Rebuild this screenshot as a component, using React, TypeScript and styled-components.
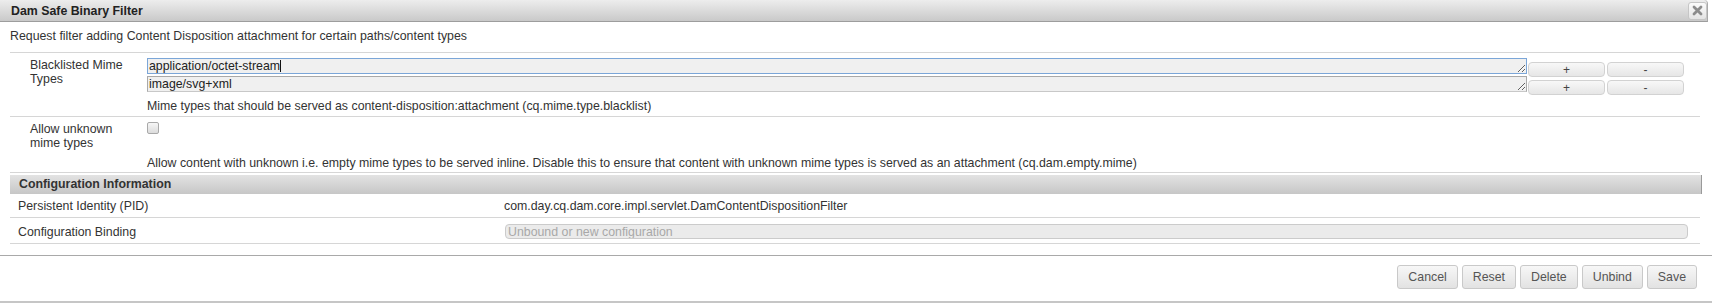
import React from "react";
import styled, { createGlobalStyle } from "styled-components";

const Global = createGlobalStyle`
  html, body { margin: 0; padding: 0; background: #fff; }
  body {
    font-family: "Liberation Sans", Arial, sans-serif;
    font-size: 12.35px;
    color: #333;
  }
  #root { width: 1712px; height: 303px; overflow: hidden; }
`;

const Dialog = styled.div`
  width: 1712px;
  height: 303px;
  display: flex;
  flex-direction: column;
  background: #fff;
`;

const TitleBar = styled.div`
  box-sizing: border-box;
  width: 1708px;
  height: 22px;
  display: flex;
  align-items: center;
  justify-content: space-between;
  padding-left: 11px;
  background: linear-gradient(#ededed, #c9c9c9);
  border-bottom: 1px solid #9d9d9d;
  border-right: 1px solid #a9a9a9;
  border-top-right-radius: 4px;
`;

const Title = styled.span`
  font-weight: bold;
  color: #222;
  line-height: 14px;
`;

const CloseButton = styled.button`
  box-sizing: border-box;
  width: 19px;
  height: 18px;
  margin: 0;
  padding: 0;
  display: flex;
  align-items: center;
  justify-content: center;
  background: linear-gradient(#fbfbfb, #e4e4e4);
  border: 1px solid #c6c6c6;
  border-radius: 3px;
`;

const Content = styled.div`
  padding: 0 12px 0 10px;
`;

const Description = styled.div`
  padding: 7px 0 9px;
  line-height: 14px;
  border-bottom: 1px solid #d6d6d6;
`;

const FieldRow = styled.div`
  display: grid;
  grid-template-columns: 137px 1fr;
  border-bottom: 1px solid #d6d6d6;
`;

const FieldLabel = styled.div`
  padding: 5px 15px 0 20px;
  line-height: 14px;
`;

const FieldValue = styled.div<{ $bottom: number }>`
  padding-top: 5px;
  padding-bottom: ${(p) => p.$bottom}px;
  display: flex;
  flex-direction: column;
  align-items: flex-start;
`;

const MultiRow = styled.div`
  display: flex;
  align-items: flex-start;
  height: 18px;
`;

const TextWrap = styled.div`
  position: relative;
  display: flex;
`;

const Caret = styled.span`
  position: absolute;
  top: 2px;
  left: 133px;
  width: 1px;
  height: 12px;
  background: #111;
`;

const TextArea = styled.textarea<{ $focused?: boolean }>`
  box-sizing: border-box;
  width: 1380px;
  height: 16px;
  margin: 0;
  padding: 0 1px;
  font-family: inherit;
  font-size: 12.35px;
  line-height: 14px;
  color: #222;
  background: #f0f0f0;
  border: 1px solid ${(p) => (p.$focused ? "#7ba6d8" : "#a9a9a9")};
  border-bottom-color: ${(p) => (p.$focused ? "#7ba6d8" : "#c8c8c8")};
  overflow: hidden;
  resize: both;
  outline: none;
`;

const SmallButton = styled.button<{ $first?: boolean }>`
  box-sizing: border-box;
  width: 77px;
  height: 15px;
  margin: 4px 0 0 ${(p) => (p.$first ? 1 : 2)}px;
  padding: 0;
  font-family: inherit;
  font-size: 12px;
  line-height: 12px;
  color: #444;
  background: linear-gradient(#f8f8f8, #e6e6e6);
  border: 1px solid #d2d2d2;
  border-radius: 4px;
`;

const Help = styled.div<{ $top: number }>`
  margin-top: ${(p) => p.$top}px;
  line-height: 14px;
`;

const Checkbox = styled.input`
  appearance: none;
  box-sizing: border-box;
  width: 12px;
  height: 12px;
  margin: 0;
  border: 1px solid #a9a9a9;
  border-radius: 2px;
  background: linear-gradient(#f6f6f6, #dcdcdc);
`;

const SectionHeader = styled.div`
  box-sizing: border-box;
  margin: 2px -2px 0 0;
  height: 19px;
  padding-left: 9px;
  line-height: 19px;
  font-weight: bold;
  color: #333;
  background: linear-gradient(#e3e3e3, #c6c6c6);
  border-right: 1px solid #9a9a9a;
`;

const InfoRow = styled.div<{ $top: number; $bottom: number }>`
  display: grid;
  grid-template-columns: 494px 1fr;
  align-items: center;
  padding: ${(p) => p.$top}px 0 ${(p) => p.$bottom}px;
  border-bottom: 1px solid #d6d6d6;
  line-height: 14px;
`;

const InfoLabel = styled.div`
  padding-left: 8px;
`;

const BindingInput = styled.input`
  box-sizing: border-box;
  width: 1183px;
  height: 15px;
  margin: 0 0 0 1px;
  padding: 0 2px;
  font-family: inherit;
  font-size: 12.35px;
  line-height: 13px;
  background: #ebebeb;
  border: 1px solid #cbcbcb;
  border-radius: 4px;
  outline: none;
  &::placeholder { color: #a8a8a8; }
`;

const Footer = styled.div`
  margin-top: 11px;
  border-top: 1px solid #a9a9a9;
  border-bottom: 2px solid #c6c6c6;
  padding: 9px 15px 12px 0;
  display: flex;
  justify-content: flex-end;
  gap: 4px;
`;

const FooterButton = styled.button`
  box-sizing: border-box;
  height: 24px;
  margin: 0;
  padding: 0 10px;
  font-family: inherit;
  font-size: 12.35px;
  color: #555;
  background: linear-gradient(#f7f7f7, #e2e2e2);
  border: 1px solid #c9c9c9;
  border-radius: 3px;
`;

const CloseIcon = () => (
  <svg width="11" height="11" viewBox="0 0 11 11">
    <path d="M2 2 L9 9 M9 2 L2 9" stroke="#8c8c8c" strokeWidth="2.8" strokeLinecap="round" />
  </svg>
);

export default function App() {
  return (
    <>
      <Global />
      <Dialog>
        <TitleBar>
          <Title>Dam Safe Binary Filter</Title>
          <CloseButton aria-label="close">
            <CloseIcon />
          </CloseButton>
        </TitleBar>
        <Content>
          <Description>
            Request filter adding Content Disposition attachment for certain paths/content types
          </Description>
          <FieldRow>
            <FieldLabel>Blacklisted Mime Types</FieldLabel>
            <FieldValue $bottom={3}>
              <MultiRow>
                <TextWrap>
                  <TextArea $focused defaultValue="application/octet-stream" rows={1} />
                  <Caret />
                </TextWrap>
                <SmallButton $first>+</SmallButton>
                <SmallButton>-</SmallButton>
              </MultiRow>
              <MultiRow>
                <TextArea defaultValue="image/svg+xml" rows={1} />
                <SmallButton $first>+</SmallButton>
                <SmallButton>-</SmallButton>
              </MultiRow>
              <Help $top={5}>
                Mime types that should be served as content-disposition:attachment (cq.mime.type.blacklist)
              </Help>
            </FieldValue>
          </FieldRow>
          <FieldRow>
            <FieldLabel>Allow unknown mime types</FieldLabel>
            <FieldValue $bottom={2}>
              <Checkbox type="checkbox" />
              <Help $top={22}>
                Allow content with unknown i.e. empty mime types to be served inline. Disable this to
                ensure that content with unknown mime types is served as an attachment
                (cq.dam.empty.mime)
              </Help>
            </FieldValue>
          </FieldRow>
          <SectionHeader>Configuration Information</SectionHeader>
          <InfoRow $top={5} $bottom={4}>
            <InfoLabel>Persistent Identity (PID)</InfoLabel>
            <div>com.day.cq.dam.core.impl.servlet.DamContentDispositionFilter</div>
          </InfoRow>
          <InfoRow $top={6} $bottom={4}>
            <InfoLabel>Configuration Binding</InfoLabel>
            <div>
              <BindingInput placeholder="Unbound or new configuration" disabled />
            </div>
          </InfoRow>
        </Content>
        <Footer>
          <FooterButton>Cancel</FooterButton>
          <FooterButton>Reset</FooterButton>
          <FooterButton>Delete</FooterButton>
          <FooterButton>Unbind</FooterButton>
          <FooterButton>Save</FooterButton>
        </Footer>
      </Dialog>
    </>
  );
}
